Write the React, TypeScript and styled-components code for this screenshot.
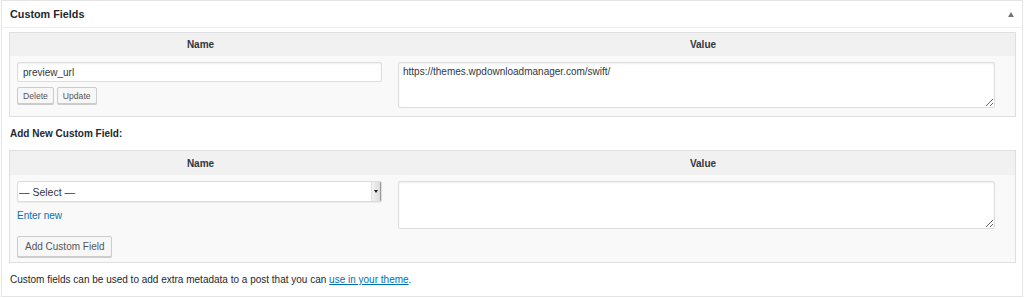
import React from "react";
import styled, { createGlobalStyle } from "styled-components";

const Global = createGlobalStyle`
  html, body { margin: 0; padding: 0; background: #fff; }
  body { font-family: "Liberation Sans", Arial, sans-serif; color: #23282d; font-size: 10px; }
  * { box-sizing: border-box; }
`;

const Postbox = styled.section`
  margin-left: 1px;
  width: 1022px;
  height: 297px;
  border: 1px solid #e5e5e5;
  box-shadow: 0 1px 1px rgba(0, 0, 0, 0.04);
  background: #fff;
  display: flex;
  flex-direction: column;
`;

const Header = styled.header`
  height: 27px;
  border-bottom: 1px solid #eee;
  display: flex;
  align-items: center;
  justify-content: space-between;
  padding: 0 8px 0 8px;
`;

const Title = styled.h2`
  margin: 0;
  font-size: 10.8px;
  font-weight: 700;
  color: #23282d;
`;

const Toggle = styled.span`
  width: 0;
  height: 0;
  border-left: 3px solid transparent;
  border-right: 3px solid transparent;
  border-bottom: 5px solid #72777c;
  margin-top: 1px;
`;

const Inside = styled.div`
  padding: 4px 6px 0 7px;
`;

const Table = styled.div`
  border: 1px solid #dfdfdf;
  background: #f9f9f9;
  display: grid;
  grid-template-columns: 381px 1fr;
`;

const HeadCell = styled.div<{ $h: number }>`
  height: ${(p) => p.$h}px;
  background: #f1f1f1;
  font-weight: 700;
  font-size: 10px;
  display: flex;
  align-items: center;
  justify-content: center;
  color: #32373c;
`;

const Cell = styled.div<{ $top: number; $bottom: number }>`
  padding: ${(p) => p.$top}px 0 ${(p) => p.$bottom}px 7px;
  display: flex;
  flex-direction: column;
  align-items: flex-start;
`;

const TextInput = styled.input`
  width: 365px;
  height: 20px;
  border: 1px solid #ddd;
  border-radius: 2px;
  box-shadow: inset 0 1px 2px rgba(0, 0, 0, 0.07);
  background: #fff;
  font-family: "Liberation Sans", Arial, sans-serif;
  font-size: 10px;
  color: #32373c;
  padding: 0 5px;
  margin: 0;
  outline: none;
`;

const ButtonRow = styled.div`
  display: flex;
  gap: 3px;
  margin-top: 5px;
`;

const Button = styled.button<{ $small?: boolean }>`
  height: ${(p) => (p.$small ? 17 : 21)}px;
  padding: 0 ${(p) => (p.$small ? 5 : 7)}px;
  font-family: "Liberation Sans", Arial, sans-serif;
  font-size: ${(p) => (p.$small ? 8.6 : 10)}px;
  color: #555;
  background: #f7f7f7;
  border: 1px solid #ccc;
  border-radius: 2px;
  box-shadow: 0 1px 0 #ccc;
  margin: 0;
  cursor: pointer;
`;

const TextArea = styled.textarea<{ $h: number }>`
  width: 597px;
  height: ${(p) => p.$h}px;
  border: 1px solid #ddd;
  border-radius: 2px;
  box-shadow: inset 0 1px 2px rgba(0, 0, 0, 0.07);
  background: #fff;
  font-family: "Liberation Sans", Arial, sans-serif;
  font-size: 10px;
  color: #32373c;
  padding: 3px 4px;
  margin: 0;
  resize: both;
  outline: none;
  display: block;
`;

const SectionLabel = styled.p`
  margin: 10px 0 9px 1px;
  font-size: 10px;
  font-weight: 700;
  line-height: 14px;
`;

const SelectWrap = styled.div`
  width: 365px;
  height: 21px;
  border: 1px solid #ddd;
  border-radius: 2px;
  background: #fff;
  box-shadow: 0 1px 1px rgba(0, 0, 0, 0.06);
  display: flex;
  align-items: stretch;
  overflow: hidden;
`;

const Select = styled.select`
  flex: 1;
  appearance: none;
  -webkit-appearance: none;
  border: 0;
  background: transparent;
  font-family: "Liberation Sans", Arial, sans-serif;
  font-size: 10.5px;
  color: #32373c;
  padding: 0 0 0 1px;
  margin: 0;
  outline: none;
`;

const Arrow = styled.span`
  width: 10px;
  background: linear-gradient(to right, #f3f3f3, #dcdcdc);
  border-left: 1px solid #e2e2e2;
  border-right: 1px solid #9a9a9a;
  display: flex;
  align-items: center;
  justify-content: center;
  &::after {
    content: "";
    border-left: 2px solid transparent;
    border-right: 2px solid transparent;
    border-top: 3px solid #222;
  }
`;

const Link = styled.a<{ $underline?: boolean }>`
  color: #0073aa;
  text-decoration: ${(p) => (p.$underline ? "underline" : "none")};
`;

const EnterNew = styled(Link)`
  display: block;
  margin-top: 7px;
  line-height: 13px;
  font-size: 10px;
`;

const AddButtonWrap = styled.div`
  margin-top: 14px;
`;

const Footer = styled.p`
  margin: 10px 0 0 1px;
  font-size: 10px;
  line-height: 14px;
`;

export default function App() {
  return (
    <>
      <Global />
      <Postbox>
        <Header>
          <Title>Custom Fields</Title>
          <Toggle />
        </Header>
        <Inside>
          <Table>
            <HeadCell $h={23}>Name</HeadCell>
            <HeadCell $h={23}>Value</HeadCell>
            <Cell $top={6} $bottom={8}>
              <TextInput defaultValue="preview_url" />
              <ButtonRow>
                <Button $small>Delete</Button>
                <Button $small>Update</Button>
              </ButtonRow>
            </Cell>
            <Cell $top={6} $bottom={8}>
              <TextArea $h={46} defaultValue="https://themes.wpdownloadmanager.com/swift/" />
            </Cell>
          </Table>
          <SectionLabel>Add New Custom Field:</SectionLabel>
          <Table>
            <HeadCell $h={24}>Name</HeadCell>
            <HeadCell $h={24}>Value</HeadCell>
            <Cell $top={6} $bottom={5}>
              <SelectWrap>
                <Select defaultValue="">
                  <option value="">— Select —</option>
                </Select>
                <Arrow />
              </SelectWrap>
              <EnterNew href="#">Enter new</EnterNew>
              <AddButtonWrap>
                <Button>Add Custom Field</Button>
              </AddButtonWrap>
            </Cell>
            <Cell $top={6} $bottom={5}>
              <TextArea $h={48} />
            </Cell>
          </Table>
          <Footer>
            Custom fields can be used to add extra metadata to a post that you can{" "}
            <Link $underline href="#">use in your theme</Link>.
          </Footer>
        </Inside>
      </Postbox>
    </>
  );
}
